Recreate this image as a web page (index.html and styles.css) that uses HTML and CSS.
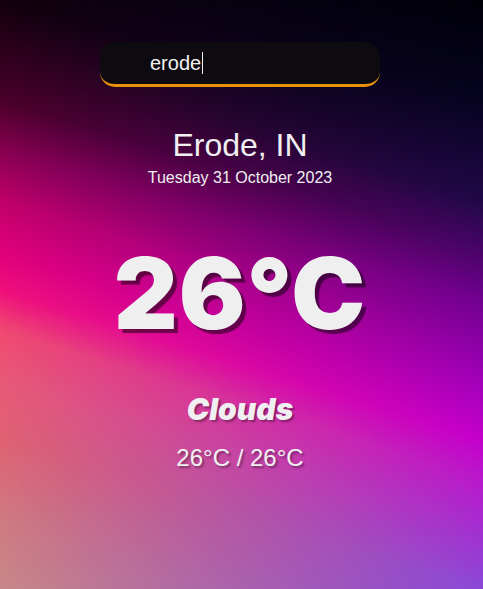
FILE: index.html
```html
<!DOCTYPE html>
<html lang="en">
<head>
<meta charset="utf-8">
<title>Weather</title>
<link rel="stylesheet" href="styles.css">
</head>
<body>
<main class="app">
  <div class="search" role="textbox" aria-label="Search city">
    <span class="search-text">erode</span><span class="caret"></span>
  </div>
  <section class="location">
    <div class="city">Erode, IN</div>
    <div class="date">Tuesday 31 October 2023</div>
  </section>
  <section class="current">
    <div class="temp">26°C</div>
    <div class="weather">Clouds</div>
    <div class="hilow">26°C / 26°C</div>
  </section>
</main>
</body>
</html>
```
FILE: styles.css
```css
html, body {
  margin: 0;
  height: 100%;
}

body {
  position: relative;
  overflow: hidden;
  font-family: "Liberation Sans", Arial, sans-serif;
  color: #f0eff1;
  background: linear-gradient(197deg,
    #000000 0%,
    #12000c 20%,
    #4a002a 33.6%,
    #880050 40.4%,
    #c00068 47.2%,
    #e0007a 54%,
    #f0107a 59.4%,
    #f04a70 64.8%,
    #e85a76 71.6%,
    #e06272 79.8%,
    #d07a80 90.6%,
    #c88888 100%);
}

body::before {
  content: "";
  position: absolute;
  inset: 0;
  z-index: 0;
  background: linear-gradient(197deg,
    #000008 0%,
    #060320 13.6%,
    #200848 27.2%,
    #480468 34%,
    #700090 40.7%,
    #a000b8 51.6%,
    #c400cc 59.7%,
    #b818cc 65.2%,
    #8a48d8 80%,
    #7a50e0 100%);
  -webkit-mask-image: linear-gradient(90deg, transparent 0%, rgba(0,0,0,.5) 50%, #000 100%);
  mask-image: linear-gradient(90deg, transparent 0%, rgba(0,0,0,.5) 50%, #000 100%);
}

.app {
  position: relative;
  z-index: 1;
  width: 480px;
  display: flex;
  flex-direction: column;
  align-items: center;
  padding-top: 42px;
}

.search {
  box-sizing: border-box;
  width: 280px;
  height: 45px;
  padding-left: 50px;
  display: flex;
  align-items: center;
  border-radius: 15px;
  border-bottom: 3px solid #e8920a;
  background: rgba(14, 11, 16, 0.96);
  font-size: 20px;
  color: #f2f2f2;
}

.caret {
  width: 1px;
  height: 22px;
  margin-left: 1px;
  background: #f2f2f2;
}

.location {
  margin-top: 40px;
  text-align: center;
}

.city {
  font-size: 32px;
  line-height: 36px;
}

.date {
  margin-top: 5px;
  font-size: 16px;
  line-height: 20px;
}

.current {
  margin-top: 56px;
  display: flex;
  flex-direction: column;
  align-items: center;
}

.temp {
  font-family: Inter, "Liberation Sans", sans-serif;
  font-weight: 900;
  font-size: 99px;
  line-height: 99px;
  letter-spacing: 1px;
  color: #f0eff0;
  text-shadow: 4px 4px 1px rgba(0, 0, 0, 0.5);
}

.weather {
  margin-top: 48px;
  font-family: Inter, "Liberation Sans", sans-serif;
  font-weight: 900;
  font-style: italic;
  font-size: 30px;
  line-height: 36px;
  text-shadow: 2px 2px 2px rgba(0, 0, 0, 0.35);
}

.hilow {
  margin-top: 17px;
  font-size: 24px;
  line-height: 28px;
  text-shadow: 2px 2px 2px rgba(0, 0, 0, 0.35);
}
```
